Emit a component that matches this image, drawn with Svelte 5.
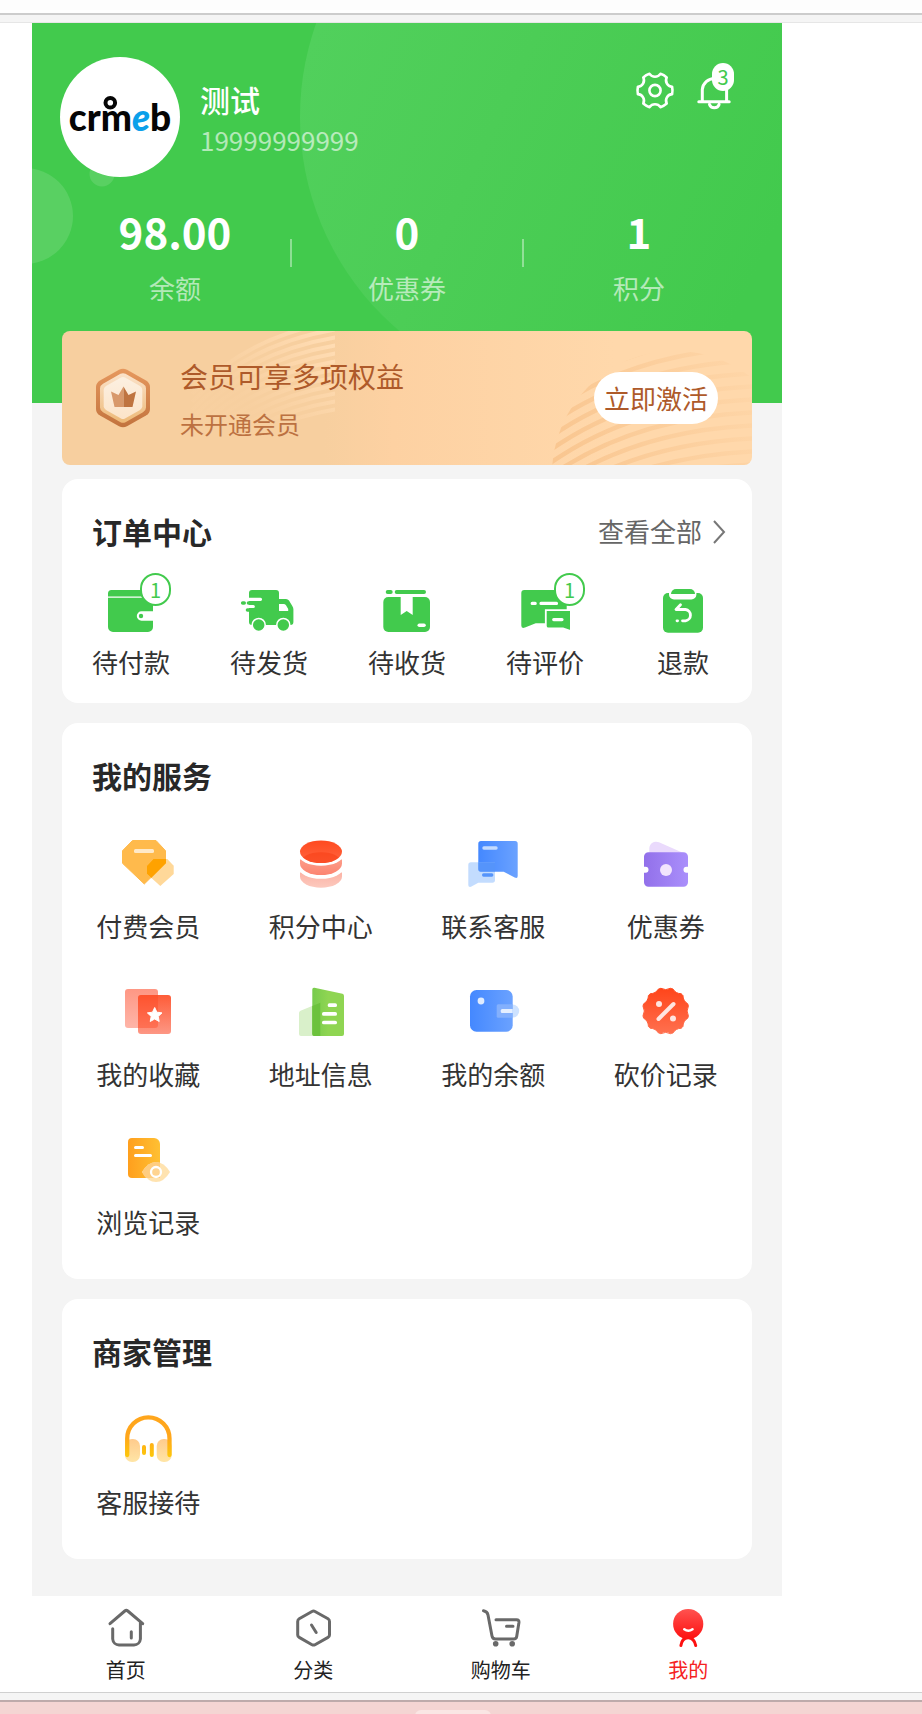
<script>
  const stats = [
    { value: '98.00', label: '余额' },
    { value: '0', label: '优惠券' },
    { value: '1', label: '积分' }
  ];

  const orders = [
    { icon: 'pay', label: '待付款', count: 1 },
    { icon: 'ship', label: '待发货' },
    { icon: 'receive', label: '待收货' },
    { icon: 'review', label: '待评价', count: 1 },
    { icon: 'refund', label: '退款' }
  ];

  const services = [
    { icon: 'vip', label: '付费会员' },
    { icon: 'points', label: '积分中心' },
    { icon: 'contact', label: '联系客服' },
    { icon: 'coupon', label: '优惠券' },
    { icon: 'favorite', label: '我的收藏' },
    { icon: 'address', label: '地址信息' },
    { icon: 'balance', label: '我的余额' },
    { icon: 'bargain', label: '砍价记录' },
    { icon: 'history', label: '浏览记录' }
  ];

  const merchant = [{ icon: 'headset', label: '客服接待' }];

  const tabs = [
    { icon: 'home', label: '首页' },
    { icon: 'category', label: '分类' },
    { icon: 'cart', label: '购物车' },
    { icon: 'me', label: '我的', active: true }
  ];

  // Closed outline with `teeth` flat tips joined by concave arcs.
  function cog(cx, cy, r, teeth, half, notch, start) {
    const at = (deg) => {
      const a = (deg * Math.PI) / 180;
      return `${(cx + r * Math.cos(a)).toFixed(2)} ${(cy + r * Math.sin(a)).toFixed(2)}`;
    };
    const step = 360 / teeth;
    let d = '';
    for (let i = 0; i < teeth; i++) {
      const c = start + i * step;
      d += i === 0 ? `M${at(c - half)}` : `A${notch} ${notch} 0 0 0 ${at(c - half)}`;
      d += `A${r} ${r} 0 0 1 ${at(c + half)}`;
    }
    return d + `A${notch} ${notch} 0 0 0 ${at(start - half)}Z`;
  }

  const gear = cog(20, 19.5, 17.5, 6, 12, 6.5, 0);
  const seal = cog(25.7, 26, 23.2, 12, 3, 10, 15);
  const leftStripes = Array.from({ length: 12 }, (_, i) => i * 8 - 12);
  const rightStripes = Array.from({ length: 16 }, (_, i) => i * 13 - 10);
</script>

{#snippet orderIcon(name)}
  <svg class="order-icon" viewBox="0 0 48 48" aria-hidden="true">
    {#if name === 'pay'}
      <path fill="#42ca4d" d="M1 11.5V8.5A3.5 3.5 0 0 1 4.500 5H42.500A3.500 3.500 0 0 1 46 8.500V11.500Z" />
      <path fill="#42ca4d" d="M1 12.700H46V26.300H34.500A4.700 4.700 0 0 0 34.500 35.700H46V42A5 5 0 0 1 41 47H6A5 5 0 0 1 1 42Z" />
      <circle cx="34" cy="31" r="2.200" fill="#42ca4d" />
    {:else if name === 'ship'}
      <path fill="#42ca4d" d="M4 16V8A3 3 0 0 1 7 5H31A3 3 0 0 1 34 8V14H41A4 4 0 0 1 44 15.500L47.300 21A6 6 0 0 1 48.400 25V37A3 3 0 0 1 45.500 40H7A3 3 0 0 1 4 37Z" />
      <path fill="#fff" d="M34 19H38.500A3 3 0 0 1 41 20.300L43.200 24V26H34Z" />
      <path stroke="#fff" stroke-width="3.200" stroke-linecap="round" d="M3 14.300H15.500M1 21.500H8.300" />
      <path stroke="#42ca4d" stroke-width="3.600" stroke-linecap="round" d="M-2.300 18H-.8M3.500 18H12M2.500 25H10" />
      <g fill="#42ca4d" stroke="#fff" stroke-width="1.500"><circle cx="13.700" cy="40" r="6.500" /><circle cx="38.300" cy="40" r="6.500" /></g>
    {:else if name === 'receive'}
      <path stroke="#42ca4d" stroke-width="4" stroke-linecap="round" d="M4.700 7H7.700M13.700 7H41" />
      <rect x=".3" y="12" width="46.700" height="35" rx="5" fill="#42ca4d" />
      <path fill="#fff" d="M17.700 12H29.700V30L23.700 26L17.700 30Z" />
      <path stroke="#fff" stroke-width="3.600" stroke-linecap="round" d="M36.300 40.200H41" />
    {:else if name === 'review'}
      <path fill="#42ca4d" d="M.3 8A3 3 0 0 1 3.300 5H42.700A3 3 0 0 1 45.700 8V38.300H14.700L4 42.500Q.3 44 .3 40.500Z" />
      <path fill="#42ca4d" stroke="#fff" stroke-width="1.800" d="M24.800 25.200H49.900V46L42 43.400H27.500Q24.800 43.400 24.800 41Z" />
      <path stroke="#fff" stroke-width="3.200" stroke-linecap="round" d="M11.200 18.400H14.200M20 18.400H35.500M32.700 34.600H41" />
    {:else}
      <rect x="4" y="8" width="40" height="39.700" rx="5" fill="#42ca4d" />
      <path fill="#fff" d="M10 8H37.400V9.500A5 5 0 0 1 32.400 14.500H15A5 5 0 0 1 10 9.500Z" />
      <path fill="#42ca4d" d="M12 9A5 5 0 0 1 17 4H31A5 5 0 0 1 36 9Z" />
      <path fill="none" stroke="#fff" stroke-width="2.800" stroke-linecap="round" stroke-linejoin="round" d="M21.500 19.800L17 24.500H26.500A5.700 5.700 0 0 1 26.500 35.800H23.500M18 35.800H18.600" />
    {/if}
  </svg>
{/snippet}

{#snippet serviceIcon(name)}
  <svg class="service-icon" viewBox="0 0 52 52" aria-hidden="true">
    {#if name === 'vip'}
      <defs><clipPath id="gem"><path d="M10 3H34.700L44 13.700V26.300L22.300 48L0 26.300V13.700Z" /></clipPath></defs>
      <path fill="#ffba4c" stroke="#ffba4c" stroke-width="1" stroke-linejoin="round" d="M10.500 3.500H34L43.500 13.700V26.300L22.300 47L.5 26.300V13.700Z" />
      <path fill="#ffd899" d="M31.300 22H45.300L51.700 28.700V37L38.300 49L25 37V28.700Z" />
      <path fill="#ffa200" clip-path="url(#gem)" d="M31.300 22H45.300L51.700 28.700V37L38.300 49L25 37V28.700Z" />
      <rect x="12" y="12" width="20" height="4" rx="1.500" fill="#ffe9c8" />
    {:else if name === 'points'}
      <defs>
        <linearGradient id="coinA" x1="0" y1="0" x2="0" y2="1"><stop stop-color="#ff4a1f" /><stop offset="1" stop-color="#ff6540" /></linearGradient>
        <linearGradient id="coinB" x1="0" y1="0" x2="0" y2="1"><stop stop-color="#fc9c89" /><stop offset="1" stop-color="#fc8470" /></linearGradient>
        <linearGradient id="coinC" x1="0" y1="0" x2="0" y2="1"><stop stop-color="#fcb3a5" /><stop offset="1" stop-color="#fcc9be" /></linearGradient>
        <clipPath id="coinTop"><ellipse cx="26" cy="14.700" rx="21" ry="11.300" /></clipPath>
      </defs>
      <path fill="url(#coinC)" d="M5 35.500V39.400A21 11.300 0 0 0 47 39.400V35.500Z" />
      <ellipse cx="26" cy="30.500" rx="22.500" ry="11.300" fill="#fff" />
      <path fill="url(#coinB)" d="M5 22.500V26.800A21 11.300 0 0 0 47 26.800V22.500Z" />
      <ellipse cx="26" cy="17.400" rx="22.500" ry="11.300" fill="#fff" />
      <ellipse cx="26" cy="14.700" rx="21" ry="11.300" fill="url(#coinA)" />
      <ellipse cx="26" cy="26.500" rx="21" ry="11.300" fill="#f83a10" opacity=".5" clip-path="url(#coinTop)" />
    {:else if name === 'contact'}
      <defs>
        <linearGradient id="talk"><stop stop-color="#4488ff" /><stop offset="1" stop-color="#6ba2ff" /></linearGradient>
      </defs>
      <path fill="url(#talk)" d="M14 4H48A2.700 2.700 0 0 1 50.700 6.700V39Q50.700 42 47.700 40.600L36.700 34.700H14A2.700 2.700 0 0 1 11.300 32V6.700A2.700 2.700 0 0 1 14 4Z" />
      <path fill="#a9cdfd" fill-opacity=".7" d="M4 25.300H28V43A2.700 2.700 0 0 1 25.300 45.700H11.300L4 49.800Q1.300 50.500 1.300 48V28A2.700 2.700 0 0 1 4 25.300Z" />
      <path fill="#5594fb" d="M11.300 25.300H28V34.700H14A2.700 2.700 0 0 1 11.300 32Z" />
      <rect x="15.300" y="9.300" width="15.400" height="3.400" rx="1.600" fill="#c3dbff" />
      <rect x="15" y="36.300" width="11.400" height="3.400" rx="1.600" fill="#5594fb" />
    {:else if name === 'coupon'}
      <defs><linearGradient id="ticket"><stop stop-color="#9270ea" /><stop offset="1" stop-color="#aa8ffb" /></linearGradient></defs>
      <path fill="#eadafc" d="M9.300 17V11.500A6.800 6.800 0 0 1 19 5.300L44.500 16.500V20H9.300Z" />
      <path fill="url(#ticket)" d="M8.500 15.300H43.500A4.500 4.500 0 0 1 48 19.800V29.700H46.500A3 3 0 0 0 46.500 35.700H48V45.200A4.500 4.500 0 0 1 43.500 49.700H8.500A4.500 4.500 0 0 1 4 45.200V35.700H5.500A3 3 0 0 0 5.500 29.700H4V19.800A4.500 4.500 0 0 1 8.500 15.300Z" />
      <circle cx="26" cy="33" r="6" fill="#f2e4fd" />
    {:else if name === 'favorite'}
      <defs>
        <linearGradient id="favA" x1="0" y1="0" x2="0" y2="1"><stop stop-color="#fe9784" /><stop offset="1" stop-color="#feb5a8" /></linearGradient>
        <linearGradient id="favB" x1="0" y1="0" x2="0" y2="1"><stop stop-color="#fe5c38" /><stop offset="1" stop-color="#fd9784" /></linearGradient>
      </defs>
      <rect x="3" y="4" width="33" height="39" rx="3" fill="url(#favA)" />
      <rect x="16" y="10" width="33" height="39" rx="3" fill="url(#favB)" />
      <path fill="#ff4620" fill-opacity=".4" d="M19 10H36V40A3 3 0 0 1 33 43H16V13A3 3 0 0 1 19 10Z" />
      <path fill="#fff" stroke="#fff" stroke-width="1" stroke-linejoin="round" d="M32.700 22.500L34.900 27.200L40 27.900L36.200 31.400L37.200 36.500L32.700 34L28.200 36.500L29.200 31.400L25.400 27.900L30.500 27.200Z" />
    {:else if name === 'address'}
      <defs><linearGradient id="tower"><stop stop-color="#77cb4d" /><stop offset=".5" stop-color="#8fd552" /></linearGradient></defs>
      <path fill="#d9f0ca" d="M4 28A2.500 2.500 0 0 1 5.500 25.700L25 17.700V51H6A2 2 0 0 1 4 49Z" />
      <path fill="url(#tower)" d="M17.300 4.500Q17.300 2.300 19.500 2.700L47.500 8.700Q49 9 49 11V49A2 2 0 0 1 47 51H19.300A2 2 0 0 1 17.300 49Z" />
      <path fill="#6cc23c" d="M17.300 21L25.300 17.700V51H19.300A2 2 0 0 1 17.300 49Z" />
      <path stroke="#fff" stroke-width="3.700" stroke-linecap="round" d="M34.500 20.200H40.200M28.800 28.900H40.200M28.800 37.500H40.200" />
    {:else if name === 'balance'}
      <rect x="3" y="5" width="42.700" height="41.700" rx="6.500" fill="url(#talk)" />
      <path fill="#cde2ff" d="M45.700 19.600A6.500 6.500 0 0 1 45.700 32.600Z" />
      <path fill="#83b0fd" d="M31.200 19.300H45.700V32.700H31.200A1.500 1.500 0 0 1 29.700 31.200V20.800A1.500 1.500 0 0 1 31.200 19.300Z" />
      <circle cx="14" cy="16" r="3.400" fill="#dfecff" />
      <path fill="#e4efff" d="M35.200 24H45.700V28H35.200A1.500 1.500 0 0 1 33.700 26.500V25.500A1.500 1.500 0 0 1 35.200 24Z" />
    {:else if name === 'bargain'}
      <defs><linearGradient id="sealFill" x1="0" y1="0" x2="0" y2="1"><stop stop-color="#ff451a" /><stop offset="1" stop-color="#ff704f" /></linearGradient></defs>
      <path d={seal} fill="url(#sealFill)" stroke="url(#sealFill)" stroke-width="1" stroke-linejoin="round" />
      <path stroke="#ffe5e0" stroke-width="4" stroke-linecap="round" d="M18.500 34L33.500 19" />
      <circle cx="19" cy="19" r="3" fill="#ffe5e0" />
      <circle cx="33" cy="33.500" r="3" fill="#ffe5e0" />
    {:else if name === 'history'}
      <defs><linearGradient id="page"><stop stop-color="#ff9f1d" /><stop offset="1" stop-color="#ffc033" /></linearGradient></defs>
      <path fill="url(#page)" d="M10 5H32A6 6 0 0 1 38 11V45H10A4 4 0 0 1 6 41V9A4 4 0 0 1 10 5Z" />
      <path stroke="#fff" stroke-width="3" stroke-linecap="round" d="M13.500 14.500H20.500M13.500 22.500H28.500" />
      <path fill="#ffe3b0" d="M20 39Q26 29 34 29T48 39Q42 49 34 49T20 39Z" />
      <path fill="#ffcd80" d="M20 39Q26 29 34 29Q36 29 38 29.800V45H24Q22 43 20 39Z" />
      <circle cx="34" cy="39" r="5" fill="#ffd491" stroke="#fff" stroke-width="2.300" />
    {:else}
      <defs>
        <linearGradient id="pad" x1="0" y1="0" x2="0" y2="1"><stop stop-color="#ffcb8c" /><stop offset="1" stop-color="#ffe5a6" /></linearGradient>
        <linearGradient id="band" gradientUnits="userSpaceOnUse" x1="0" y1="24" x2="0" y2="44"><stop stop-color="#ffa61c" /><stop offset="1" stop-color="#fdc80a" /></linearGradient>
      </defs>
      <rect x="3" y="26" width="15" height="23" rx="7" fill="url(#pad)" />
      <rect x="34.700" y="26" width="15" height="23" rx="7" fill="url(#pad)" />
      <path fill="none" stroke="url(#band)" stroke-width="4.300" stroke-linecap="round" d="M5.200 42V25.500A21.100 21.100 0 0 1 47.500 25.500V42" />
      <path stroke="url(#band)" stroke-width="4" stroke-linecap="round" d="M22 34L22.010 40M29.800 32L29.810 42" />
    {/if}
  </svg>
{/snippet}

{#snippet tabIcon(name)}
  <svg class="tab-icon" viewBox="0 0 40 40" fill="none" stroke="#696969" stroke-width="3" stroke-linecap="round" stroke-linejoin="round" aria-hidden="true">
    {#if name === 'home'}
      <path d="M4 15.700L18.800 3Q20.300 1.800 21.800 3L36.700 15.700M34.400 14.800V31A6.500 6.500 0 0 1 28 37H13A6.500 6.500 0 0 1 6.700 31V20.700M25.300 23.700V30" />
    {:else if name === 'category'}
      <path d="M19 3.500Q20.500 2.700 22 3.500L35 10.800Q36.500 11.700 36.500 13.400V27Q36.500 28.600 35 29.400L22 36.700Q20.500 37.500 19 36.700L6.200 29.400Q4.700 28.600 4.700 27V13.400Q4.700 11.700 6.200 10.800ZM18.500 17L23.200 24.500" />
    {:else if name === 'cart'}
      <path d="M2.500 2.800Q6.300 3.500 7 7L11 28Q11.500 31 14.500 31H32.500Q35.300 31 35.700 28.500L37.900 14.800Q38.300 11.700 35.500 11.700H15M25.500 18.200H32" />
      <g fill="#696969" stroke="none"><circle cx="14.700" cy="35.700" r="2.800" /><circle cx="31.200" cy="35.700" r="2.800" /></g>
    {:else}
      <defs><linearGradient id="face" x1="0" y1="0" x2="0" y2="1"><stop stop-color="#ff5350" /><stop offset="1" stop-color="#fd1010" /></linearGradient></defs>
      <path stroke="#fd1010" d="M12.900 37.500Q14 30 20 29.800T27.700 37.500" />
      <circle cx="20.200" cy="16" r="15.100" fill="url(#face)" stroke="none" />
      <path stroke="#fff" stroke-width="2.600" d="M16.300 21.300Q20.400 24.200 24.500 21.300" />
    {/if}
  </svg>
{/snippet}

<div class="top-edge"></div>

<div class="phone">
  <header>
    <svg class="backdrop" viewBox="0 0 750 380" preserveAspectRatio="xMinYMin slice" aria-hidden="true">
      <defs>
        <linearGradient id="glow" x1=".05" y1=".3" x2=".86" y2=".68"><stop stop-color="#51d05c" /><stop offset=".4" stop-color="#4ccd56" /><stop offset="1" stop-color="#42ca4d" /></linearGradient>
      </defs>
      <circle cx="548" cy="94" r="280" fill="url(#glow)" />
      <circle cx="-7" cy="193" r="48" fill="#fff" opacity=".12" />
      <circle cx="70" cy="151" r="12.500" fill="#fff" opacity=".12" />
    </svg>
    <div class="profile">
      <svg class="avatar" viewBox="0 0 120 120" role="img" aria-label="crmeb">
        <circle cx="60" cy="60" r="60" fill="#fff" />
        <text x="60" y="74" text-anchor="middle">crm<tspan class="blue">e</tspan>b</text>
        <circle cx="50.300" cy="45.700" r="4.800" fill="#fff" stroke="#050505" stroke-width="4" />
      </svg>
      <div class="who">
        <h1>测试</h1>
        <p>19999999999</p>
      </div>
      <div class="actions">
        <button aria-label="设置">
          <svg viewBox="0 0 40 40" fill="none" stroke="#fff" stroke-width="2.600" stroke-linejoin="round"><path d={gear} /><circle cx="20" cy="19.500" r="5.600" /></svg>
        </button>
        <button aria-label="消息">
          <svg viewBox="0 0 40 40" fill="none" stroke="#fff" stroke-width="3" stroke-linecap="round"><path d="M8.300 30V18.500A12.200 12.200 0 0 1 32.600 18.500V30M4.800 30.700H35.200M15.500 33.500A5 4.500 0 0 0 25.100 33.500" /></svg>
          <span class="bell-count">3</span>
        </button>
      </div>
    </div>
    <div class="stats">
      {#each stats as stat, i}
        {#if i > 0}<i></i>{/if}
        <a href="#stat"><strong>{stat.value}</strong><span>{stat.label}</span></a>
      {/each}
    </div>
  </header>

  <main>
    <section class="member">
      <svg class="stripes" viewBox="0 0 690 134" preserveAspectRatio="none" fill="none" aria-hidden="true">
        <defs>
          <linearGradient id="fadeL" gradientUnits="userSpaceOnUse" x1="190" y1="75" x2="262" y2="5"><stop stop-color="#ffd9ae" stop-opacity=".08" /><stop offset="1" stop-color="#ffdcb3" /></linearGradient>
          <linearGradient id="fadeR" gradientUnits="userSpaceOnUse" x1="490" y1="120" x2="690" y2="60"><stop stop-color="#f9c690" /><stop offset="1" stop-color="#f9c690" stop-opacity=".15" /></linearGradient>
          <clipPath id="clipL"><path d="M112 0H273V92H112Z" /></clipPath>
          <clipPath id="clipR"><circle cx="613" cy="143" r="123" /></clipPath>
        </defs>
        <g clip-path="url(#clipL)" stroke="url(#fadeL)" stroke-width="4">
          {#each leftStripes as y}<path d="M130 {y + 75}Q190 {y + 12} 290 {y}" />{/each}
        </g>
        <g clip-path="url(#clipR)" stroke="url(#fadeR)" stroke-width="4.500">
          {#each rightStripes as y}<path d="M470 {y + 78}Q560 {y + 4} 700 {y}" />{/each}
        </g>
      </svg>
      <svg class="crown" viewBox="0 0 56 60" aria-hidden="true">
        <defs>
          <linearGradient id="rim" x1="0" y1="0" x2="0" y2="1"><stop stop-color="#e6985e" /><stop offset="1" stop-color="#c2733e" /></linearGradient>
          <linearGradient id="inner" x1="0" y1="0" x2="0" y2="1"><stop stop-color="#fbe3cb" /><stop offset="1" stop-color="#edb977" /></linearGradient>
          <linearGradient id="core" x1="0" y1="0" x2="0" y2="1"><stop stop-color="#fcf0e1" /><stop offset="1" stop-color="#fce4c9" /></linearGradient>
        </defs>
        <path fill="url(#rim)" d="M24 1.700Q28 -.3 32 1.700L51 12.500Q55 15 55 19V41Q55 45 51 47.500L32 58.300Q28 60.300 24 58.300L5 47.500Q1 45 1 41V19Q1 15 5 12.500Z" />
        <path fill="url(#inner)" d="M25.500 5.800Q28 4.500 30.500 5.800L48 15.800Q51 17.500 51 20.500V39.500Q51 42.500 48 44.200L30.500 54.200Q28 55.500 25.500 54.200L8 44.200Q5 42.500 5 39.500V20.500Q5 17.500 8 15.800Z" />
        <path fill="url(#core)" d="M26 9.500Q28 8.500 30 9.500L45 18Q47.300 19.500 47.300 21.800V38.200Q47.300 40.500 45 42L30 50.500Q28 51.500 26 50.500L11 42Q8.700 40.500 8.700 38.200V21.800Q8.700 19.500 11 18Z" />
        <path fill="#d8996b" d="M28.500 18.500V39H19.500L16 23.500L23.500 27Z" />
        <path fill="#bf7440" d="M28.500 18.500L33.500 27L41 23.500L37.500 39H28.500Z" />
      </svg>
      <div class="member-text">
        <h2>会员可享多项权益</h2>
        <p>未开通会员</p>
      </div>
      <button class="activate">立即激活</button>
    </section>

    <section class="card orders">
      <div class="card-head">
        <h2>订单中心</h2>
        <a class="more" href="#orders">查看全部
          <svg viewBox="0 0 14 24" fill="none" stroke="#777" stroke-width="2" aria-hidden="true"><path d="M2 1L12 12L2 23" /></svg>
        </a>
      </div>
      <div class="order-grid">
        {#each orders as item}
          <a href="#order">
            <span class="icon-wrap">
              {@render orderIcon(item.icon)}
              {#if item.count}<span class="count">{item.count}</span>{/if}
            </span>
            {item.label}
          </a>
        {/each}
      </div>
    </section>

    <section class="card services">
      <div class="card-head"><h2>我的服务</h2></div>
      <div class="service-grid">
        {#each services as item}
          <a href="#service">{@render serviceIcon(item.icon)}{item.label}</a>
        {/each}
      </div>
    </section>

    <section class="card services">
      <div class="card-head"><h2>商家管理</h2></div>
      <div class="service-grid">
        {#each merchant as item}
          <a href="#merchant">{@render serviceIcon(item.icon)}{item.label}</a>
        {/each}
      </div>
    </section>
  </main>

  <nav>
    {#each tabs as tab}
      <a href="#tab" class:active={tab.active} aria-current={tab.active ? 'page' : undefined}>{@render tabIcon(tab.icon)}{tab.label}</a>
    {/each}
  </nav>
</div>

<div class="bottom-edge"></div>
<div class="dock"><span></span></div>

<style>
  :global(body) {
    margin: 0;
    background: #fff;
    font-family: 'Noto Sans CJK SC', 'Noto Sans', sans-serif;
    color: #333;
  }
  h1, h2, p { margin: 0; font-weight: 400; }
  a { color: inherit; text-decoration: none; }
  button { border: 0; padding: 0; background: none; font: inherit; cursor: pointer; }
  svg { display: block; flex: none; overflow: visible; }

  .top-edge {
    box-sizing: border-box;
    height: 10px;
    margin-top: 13px;
    border-top: 2px solid #cdcdcd;
    border-bottom: 1px solid #e6e6e6;
    background: #f5f5f5;
    box-shadow: 0 -13px #fdfdfd;
  }
  .phone { max-width: 750px; margin-left: 32px; background: #f4f4f4; }

  header {
    position: relative;
    padding: 34px 28px 98px;
    background: #42ca4d;
    color: #fff;
    overflow: hidden;
  }
  .backdrop { position: absolute; left: 0; top: 0; width: 100%; height: 100%; }
  .profile { position: relative; display: flex; align-items: center; gap: 20px; }
  .avatar { width: 120px; height: 120px; }
  .avatar text { font: 900 37px Lato, sans-serif; fill: #050505; }
  .avatar .blue { fill: #0aa0ea; font-style: italic; }
  .who { flex: 1; display: flex; flex-direction: column; padding-top: 2px; }
  h1 { font-size: 30px; line-height: 44px; font-weight: 500; }
  .who p { font-size: 26px; line-height: 38px; opacity: .6; }
  .actions { display: flex; gap: 19px; align-self: flex-start; margin: 14px 20px 0 0; }
  .actions button { position: relative; }
  .actions svg { width: 40px; height: 40px; }
  .bell-count {
    position: absolute;
    left: 18px;
    top: -8px;
    min-width: 22px;
    border-radius: 11px;
    background: #fff;
    color: #42ca4d;
    font-size: 20px;
    line-height: 28px;
    text-align: center;
  }
  .stats { position: relative; display: flex; align-items: center; margin-top: 24px; }
  .stats a { flex: 1; display: flex; flex-direction: column; align-items: center; gap: 10px; }
  .stats strong { font-size: 42px; line-height: 60px; font-weight: 700; }
  .stats span { font-size: 26px; line-height: 34px; opacity: .6; }
  .stats i { width: 2px; height: 28px; background: #fff; opacity: .4; }

  main { padding: 0 30px 37px; margin-top: -72px; position: relative; }
  .member {
    position: relative;
    display: flex;
    align-items: center;
    box-sizing: border-box;
    min-height: 134px;
    padding: 0 34px 0 33px;
    border-radius: 8px;
    background: linear-gradient(90deg, #f7cf9f 0%, #f7cf9f 38%, #fdd1a2 48%, #ffd8ab 80%);
    overflow: hidden;
  }
  .stripes { position: absolute; left: 0; top: 0; width: 100%; height: 100%; }
  .crown { position: relative; width: 56px; height: 60px; }
  .member-text { position: relative; flex: 1; margin-left: 29px; padding-top: 4px; color: #ae5a2a; }
  .member-text h2 { font-size: 28px; line-height: 48px; }
  .member-text p { font-size: 24px; line-height: 48px; opacity: .8; }
  .activate {
    position: relative;
    padding: 0 10px;
    border-radius: 26px;
    background: #fff;
    color: #ae5a2a;
    font-size: 26px;
    line-height: 52px;
  }

  .card { margin-top: 20px; border-radius: 16px; background: #fff; }
  .member + .card { margin-top: 14px; }
  .card-head {
    display: flex;
    justify-content: space-between;
    align-items: center;
    box-sizing: border-box;
    height: 106px;
    padding: 0 26px 3px 30px;
  }
  .card-head h2 { font-size: 30px; font-weight: 700; color: #282828; }
  .more { display: flex; align-items: center; gap: 10px; font-size: 26px; color: #666; }
  .more svg { width: 14px; height: 24px; margin-top: 2px; }
  .order-grid { display: grid; grid-template-columns: repeat(5, 1fr); padding-bottom: 22px; }
  .order-grid a, .service-grid a { display: flex; flex-direction: column; align-items: center; font-size: 26px; line-height: 38px; }
  .order-grid a { gap: 10px; }
  .icon-wrap { position: relative; }
  .order-icon { width: 48px; height: 48px; }
  .count {
    position: absolute;
    left: 33px;
    top: -12px;
    box-sizing: border-box;
    min-width: 31px;
    border: 2px solid #42ca4d;
    border-radius: 17px;
    background: #fff;
    color: #42ca4d;
    font-size: 20px;
    line-height: 29px;
    text-align: center;
  }
  .service-grid { display: grid; grid-template-columns: repeat(4, 1fr); row-gap: 40px; padding: 8px 0 38px; }
  .service-grid a { gap: 18px; }
  .service-icon { width: 52px; height: 52px; }

  nav { display: grid; grid-template-columns: repeat(4, 1fr); padding: 12px 0 7px; background: #fff; }
  nav a { display: flex; flex-direction: column; align-items: center; gap: 7px; font-size: 20px; line-height: 30px; color: #222; }
  nav a.active { color: #f52222; }
  .tab-icon { width: 40px; height: 40px; }

  .bottom-edge { height: 7px; border-top: 1px solid #d0d0d0; border-bottom: 2px solid #bdabab; background: #f5f5f5; }
  .dock { height: 12px; padding-left: 45%; background: #f4d5d3; overflow: hidden; }
  .dock span { display: block; width: 76px; height: 16px; margin-top: 8px; border-radius: 6px; background: #fae6e4; }
</style>
